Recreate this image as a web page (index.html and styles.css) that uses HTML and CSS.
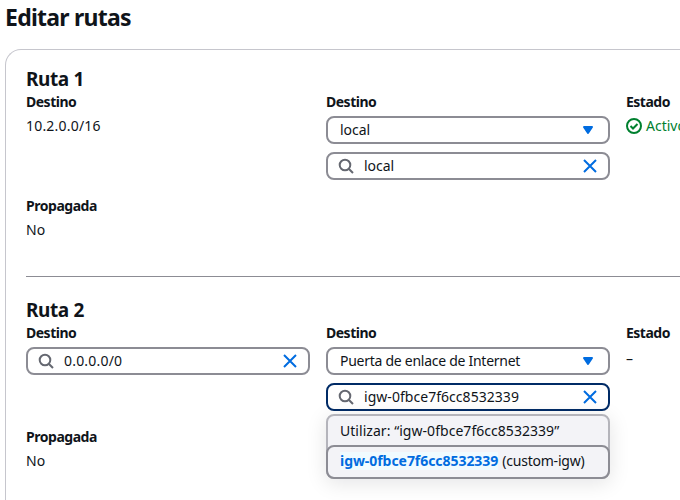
FILE: index.html
```html
<!DOCTYPE html>
<html lang="es">
<head>
<meta charset="utf-8">
<title>Editar rutas</title>
<link rel="stylesheet" href="styles.css">
</head>
<body>
<svg width="0" height="0" class="defs" aria-hidden="true">
  <symbol id="search" viewBox="0 0 16 16"><circle cx="7" cy="7" r="5.3" /><path d="M10.7 10.7 15 15" /></symbol>
  <symbol id="close" viewBox="0 0 16 16"><path d="m2 2 12 12M14 2 2 14" /></symbol>
  <symbol id="caret" viewBox="0 0 16 16"><path d="M4 5h8l-4 6z" /></symbol>
  <symbol id="check" viewBox="0 0 16 16"><circle cx="8" cy="8" r="7" /><path d="m4.5 8 2.5 2.5L11.5 6" /></symbol>
</svg>
<h1><span>Editar rutas</span></h1>
<main class="card">
  <section class="route">
    <h2><span>Ruta 1</span></h2>
    <div class="grid">
      <div class="field"><div class="label"><span>Destino</span></div><div class="value"><span class="ip">10.2.0.0/16</span></div></div>
      <div class="field">
        <div class="label"><span>Destino</span></div>
        <div class="control select"><span class="text">local</span><svg class="icon caret"><use href="#caret"/></svg></div>
        <div class="control"><svg class="icon search"><use href="#search"/></svg><span class="text">local</span><svg class="icon close"><use href="#close"/></svg></div>
      </div>
      <div class="field"><div class="label"><span>Estado</span></div><div class="value status"><svg class="icon"><use href="#check"/></svg><span>Activo</span></div></div>
    </div>
    <div class="field spread"><div class="label wide"><span>Propagada</span></div><div class="value"><span>No</span></div></div>
  </section>
  <hr>
  <section class="route">
    <h2><span>Ruta 2</span></h2>
    <div class="grid">
      <div class="field"><div class="label"><span>Destino</span></div>
        <div class="control"><svg class="icon search"><use href="#search"/></svg><span class="text ip">0.0.0.0/0</span><svg class="icon close"><use href="#close"/></svg></div>
      </div>
      <div class="field">
        <div class="label"><span>Destino</span></div>
        <div class="control select"><span class="text phrase">Puerta de enlace de Internet</span><svg class="icon caret"><use href="#caret"/></svg></div>
        <div class="combo">
          <div class="control focused"><svg class="icon search"><use href="#search"/></svg><span class="text code">igw-0fbce7f6cc8532339</span><svg class="icon close"><use href="#close"/></svg></div>
          <div class="menu">
            <div class="option"><span class="use">Utilizar: “igw-0fbce7f6cc8532339”</span></div>
            <div class="option active"><b>igw-0fbce7f6cc8532339</b><span class="suffix">(custom-igw)</span></div>
          </div>
        </div>
      </div>
      <div class="field"><div class="label"><span>Estado</span></div><div class="value dash">–</div></div>
    </div>
    <div class="field spread"><div class="label wide"><span>Propagada</span></div><div class="value"><span>No</span></div></div>
  </section>
</main>
</body>
</html>
```
FILE: styles.css
```css
* { box-sizing: border-box; }
html { overflow: hidden; }
body {
  display: flex;
  flex-direction: column;
  margin: 0;
  padding: 4px 0 0 5px;
  height: 500px;
  overflow: hidden;
  background: #fff;
  color: #0f141a;
  font: 14px/20px "Noto Sans", "Open Sans", sans-serif;
  white-space: nowrap;
}
.defs { position: absolute; }
h1 { flex: none; margin: 0; font-size: 23px; line-height: 27px; font-weight: 700; letter-spacing: -0.75px; }
.card {
  flex: 1;
  min-height: 0;
  overflow: hidden;
  margin-top: 18px;
  padding: 17px 0 0 20px;
  border: 1px solid #c6c6cd;
  border-width: 1px 0 0 1px;
  border-radius: 16px 0 0 0;
}
h2 { margin: 0; font-size: 19px; line-height: 25px; font-weight: 700; letter-spacing: -0.4px; }
.grid { display: grid; grid-template-columns: repeat(3, 284px); gap: 16px; height: 88px; }
.label { height: 20px; font-weight: 700; letter-spacing: -0.5px; }
.wide { letter-spacing: -0.47px; }
.value { margin-top: 4px; }
.spread { margin-top: 16px; }
hr { height: 1px; margin: 36px 0 21px; border: 0; background: #8c8c94; }
.control {
  display: flex;
  align-items: center;
  height: 28px;
  margin-top: 8px;
  padding: 0 10px;
  border: 2px solid #8c8c94;
  border-radius: 8px;
  background: #fff;
}
.label + .control { margin-top: 4px; }
.select { padding-left: 12px; }
.control .text { flex: 1; letter-spacing: -0.05px; }
.ip, .control .ip { letter-spacing: 0.2px; }
.control .phrase { letter-spacing: -0.27px; }
.control .code { letter-spacing: 0.04px; }
.use { letter-spacing: 0.04px; }
.icon { width: 16px; height: 16px; fill: none; stroke: currentColor; stroke-width: 2; flex: none; }
.search { margin-right: 10px; color: #656871; }
.close { color: #006ce0; }
.caret { margin-right: 2px; color: #006ce0; fill: currentColor; stroke-linejoin: round; }
.status { display: flex; align-items: center; gap: 4px; color: #00802f; }
.dash { padding-top: 3px; line-height: 17px; }
.combo { position: relative; }
.focused { border-color: #002b66; }
.menu {
  position: absolute;
  top: 31px;
  left: 0;
  width: 284px;
  height: 65px;
  border: 2px solid #b4b4bb;
  border-radius: 8px;
  background: #f3f3f7;
  box-shadow: 0 4px 20px 1px rgba(0, 7, 22, 0.1);
}
.option { display: flex; align-items: center; height: 30px; padding: 0 12px; }
.active {
  height: 34px;
  margin: -1px -2px 0;
  padding: 0 12px 2px;
  border: 2px solid #8c8c94;
  border-radius: 8px;
}
.active b { color: #006ce0; background: #f0fbff; line-height: 18px; letter-spacing: -0.05px; }
.suffix { margin-left: 4px; letter-spacing: -0.22px; }
```
